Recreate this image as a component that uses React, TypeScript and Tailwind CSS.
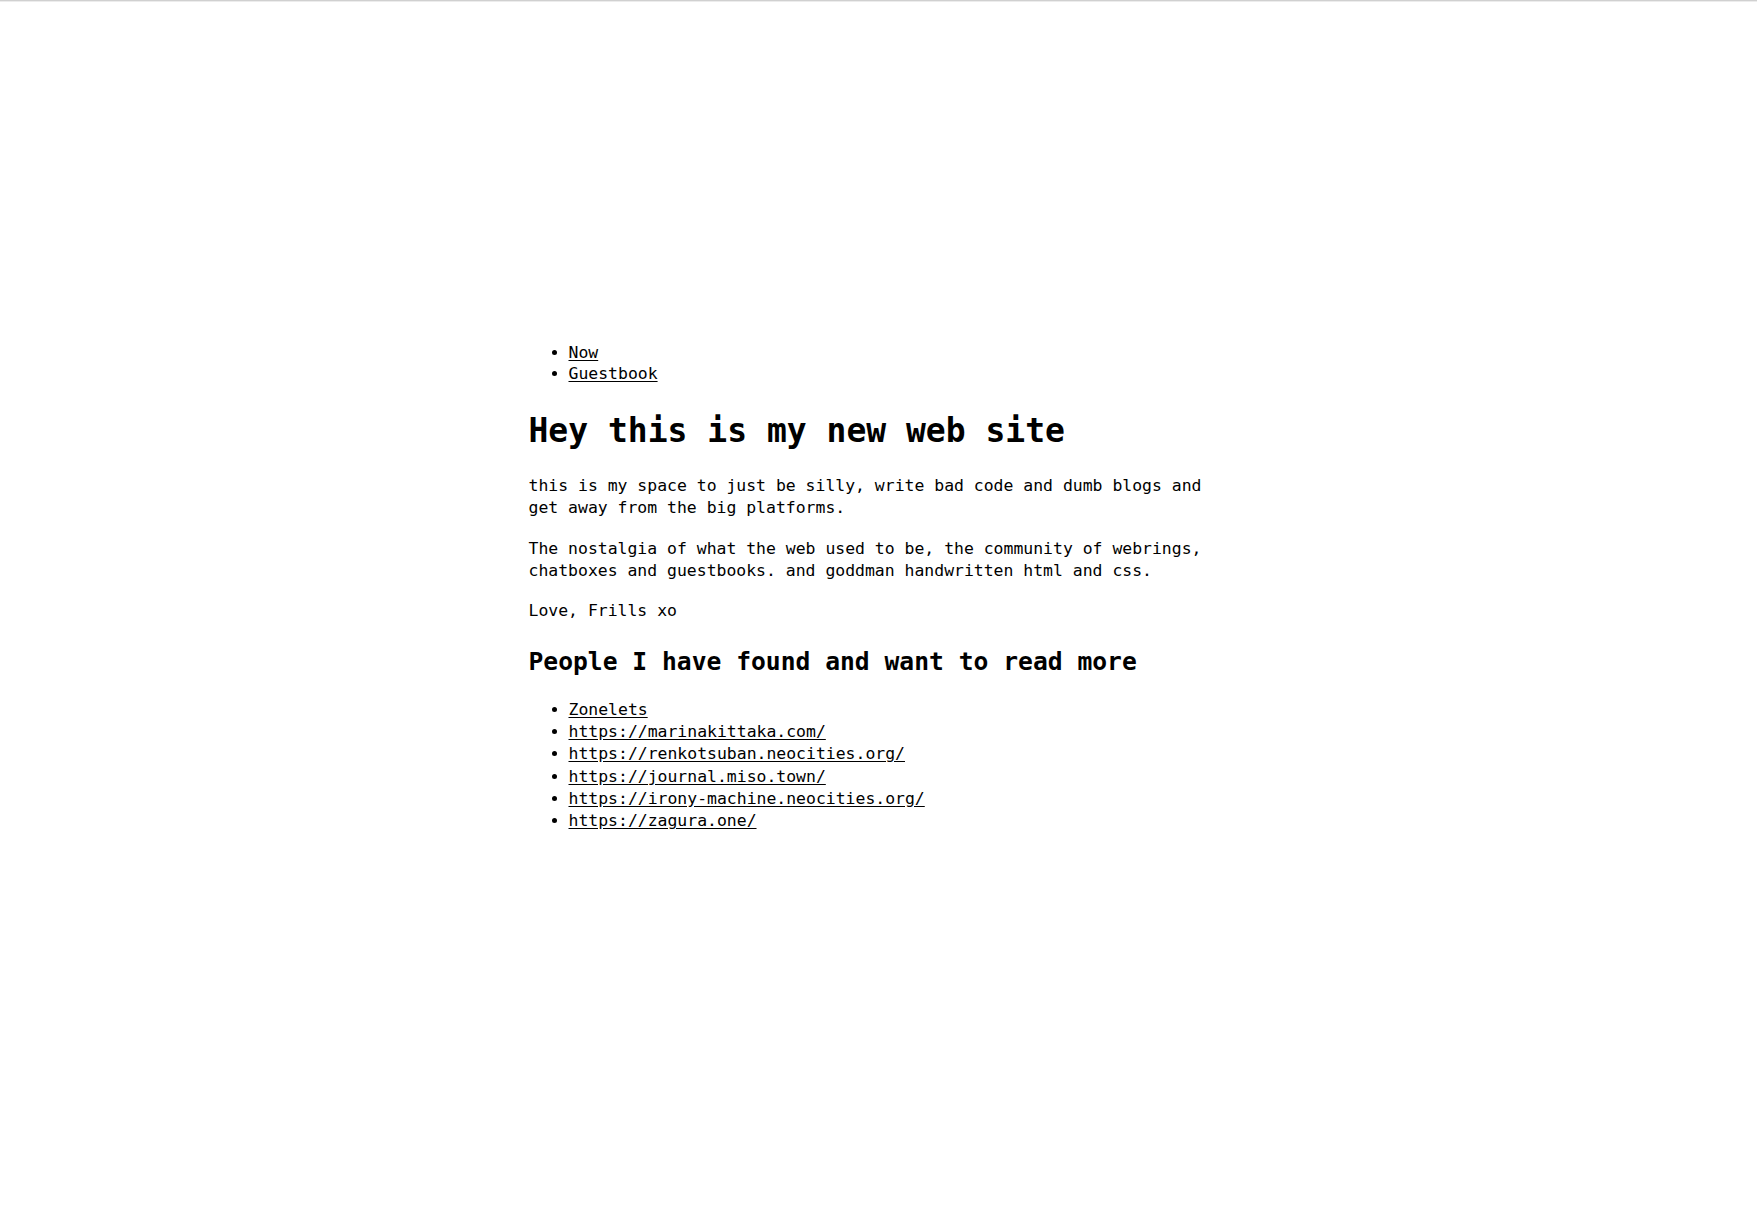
const links = [
  { label: "Zonelets" },
  { label: "https://marinakittaka.com/" },
  { label: "https://renkotsuban.neocities.org/" },
  { label: "https://journal.miso.town/" },
  { label: "https://irony-machine.neocities.org/" },
  { label: "https://zagura.one/" },
];

export default function App() {
  return (
    <div className="min-h-[1222px] bg-white text-black font-['DejaVu_Sans_Mono',monospace] text-[16.45px] leading-[22px]">
      <div className="h-[1px] bg-[#d0d0d0]" />
      <div className="h-[1px] bg-[#ececec]" />
      <main className="max-w-[700px] mx-auto pt-[340px]">
        <ul className="list-disc pl-10 leading-[21.4px]">
          <li>
            <a href="#" className="underline underline-offset-2">Now</a>
          </li>
          <li>
            <a href="#" className="underline underline-offset-2">Guestbook</a>
          </li>
        </ul>

        <h1 className="mt-[26px] mb-[24px] text-[33px] leading-[40px] font-bold">
          Hey this is my new web site
        </h1>

        <p>
          this is my space to just be silly, write bad code and dumb blogs and
          get away from the big platforms.
        </p>
        <p className="mt-[19px]">
          The nostalgia of what the web used to be, the community of webrings,
          chatboxes and guestbooks. and goddman handwritten html and css.
        </p>
        <p className="mt-[18px]">Love, Frills xo</p>

        <h2 className="mt-[25px] mb-[22px] text-[24.65px] leading-[30px] font-bold">
          People I have found and want to read more
        </h2>

        <ul className="list-disc pl-10 leading-[22.3px]">
          {links.map((l) => (
            <li key={l.label}>
              <a href="#" className="underline underline-offset-2">{l.label}</a>
            </li>
          ))}
        </ul>
      </main>
    </div>
  );
}
